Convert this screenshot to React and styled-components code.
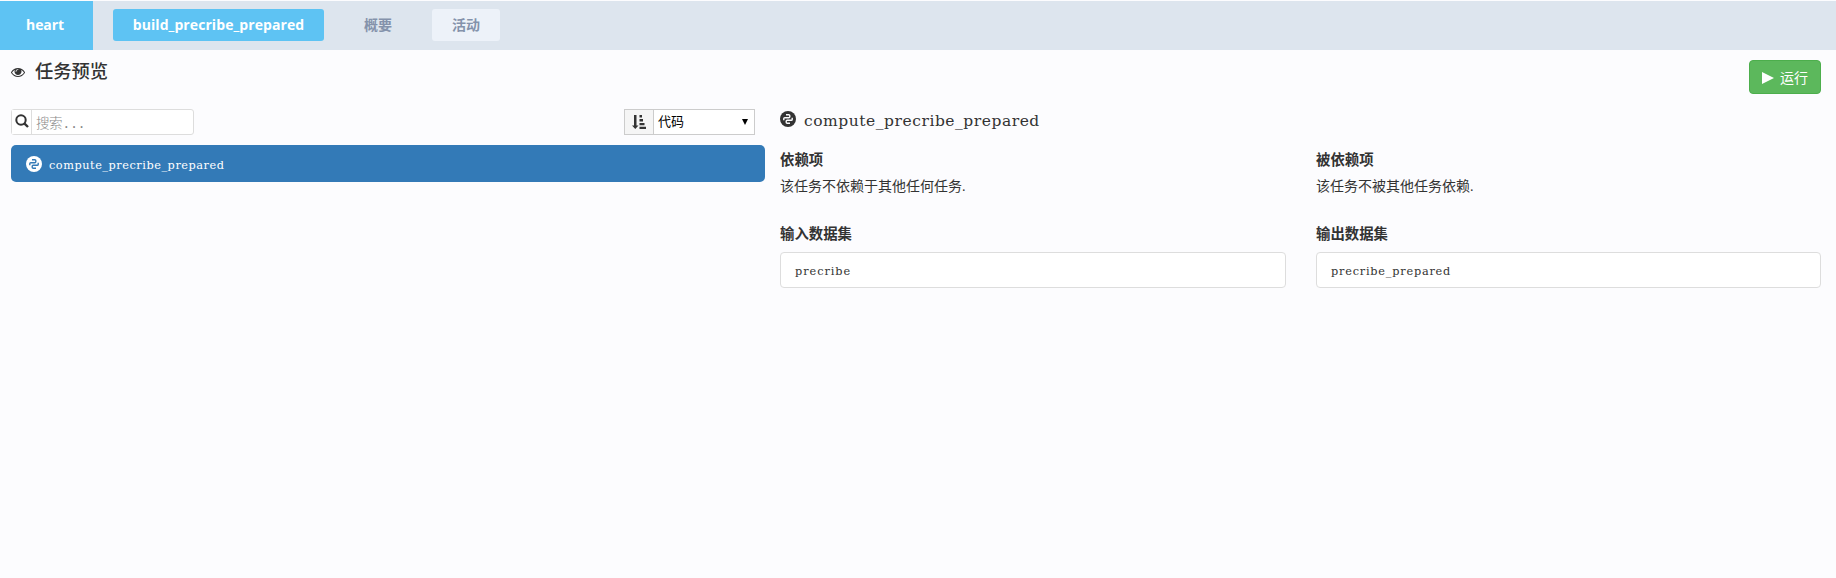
import React from 'react';
import styled, { createGlobalStyle } from 'styled-components';

const song = '"Liberation Serif", "Noto Sans CJK SC", serif';
const slab = '"DejaVu Serif", serif';

const Global = createGlobalStyle`
  * { box-sizing: border-box; }
  body { margin: 0; background: #fcfcfe; color: #333; font: 15px/20px ${song}; }
  h1, h2, h3, p { margin: 0; }
`;
const Page = styled.div`min-height: 578px;`;
const Bar = styled.nav`
  display: flex; align-items: stretch; height: 50px;
  border-top: 1px solid #fcfcfe; background: #dde5ee;
  font-family: "Open Sans", "Noto Sans CJK SC", sans-serif; font-size: 14px; font-weight: 700;
`;
const Brand = styled.div`
  display: flex; align-items: center; justify-content: center;
  width: 93px; padding: 0 3px 1px 0; background: #5ec3f3; color: #fff; letter-spacing: -0.1px;
`;
const Tabs = styled.div`display: flex; align-items: flex-start; padding: 8px 0 0 20px;`;
const Tab = styled.div`
  display: flex; align-items: center; justify-content: center; height: 32px;
  width: ${p => p.$w}px; border-radius: 3px; letter-spacing: ${p => p.$track || 0}px;
  color: ${p => (p.$kind === 'active' ? '#fff' : '#8492ab')};
  background: ${p => ({ active: '#5ec3f3', soft: '#edf2f9' }[p.$kind] || 'transparent')};
`;
const Header = styled.header`
  display: flex; justify-content: space-between; align-items: flex-start; height: 59px; padding: 10px 15px 0 11px;
`;
const Title = styled.h1`
  display: flex; align-items: center; gap: 10px; height: 24px;
  font-size: 18.3px; line-height: 22px; font-weight: 500; color: #333;
`;
const Run = styled.button`
  display: flex; align-items: center; gap: 6px; width: 72px; height: 34px; padding: 3px 0 0 12px;
  border: 1px solid #4cae4c; border-radius: 4px; background: #5cb85c; color: #fff;
  font: 400 14px/20px ${song};
  svg { margin-top: -2px; }
`;
const Body = styled.main`display: flex; gap: 15px; padding: 0 15px 0 11px;`;
const Side = styled.section`width: 754px;`;
const Tools = styled.div`display: flex; justify-content: space-between; padding-right: 10px; margin-bottom: 10px;`;
const Search = styled.label`
  display: flex; width: 183px; height: 26px; border: 1px solid #ddd; border-radius: 3px; background: #fff;
`;
const Addon = styled.span`
  display: flex; align-items: center; justify-content: center; width: ${p => p.$w}px;
  border-right: 1px solid ${p => p.$line}; background: ${p => p.$bg};
  padding-bottom: ${p => p.$lift || 0}px;
`;
const Field = styled.input`
  flex: 1; min-width: 0; border: 0; padding: 5px 0 0 4px; background: transparent; outline: 0;
  font: 300 13.5px/20px "Liberation Mono", "Noto Sans CJK SC", monospace; letter-spacing: -0.4px;
  &::placeholder { color: #888; opacity: 1; }
`;
const Sort = styled.div`display: flex; width: 131px; height: 26px; border: 1px solid #ccc; background: #fff;`;
const Value = styled.div`
  display: flex; flex: 1; align-items: center; justify-content: space-between; padding: 0 6px 0 4px;
  color: #000; font-size: 13px; font-weight: 400;
`;
const Item = styled.div`
  display: flex; align-items: center; gap: 7px; height: 37px; padding: 0 15px; border-radius: 5px;
  background: #337ab7; color: #fff;
`;
const Code = styled.span`
  font-family: ${slab}; font-size: ${p => p.$size || 11.3}px; letter-spacing: ${p => p.$track}px;
  line-height: 16px; padding-top: ${p => p.$drop || 0}px;
`;
const Detail = styled.section`flex: 1;`;
const Name = styled.h2`
  display: flex; align-items: center; gap: 8px; height: 23px; margin-bottom: 18px; font-weight: 400;
  svg { margin-bottom: 3px; }
`;
const Grid = styled.div`display: grid; grid-template-columns: 506px 505px; column-gap: 30px; row-gap: 27px;`;
const Heading = styled.h3`height: 20px; margin-bottom: 7px; font-size: 14.4px; line-height: 20px; font-weight: 700;`;
const Text = styled.p`height: 20px; font-size: 14px; line-height: 20px; font-weight: 400;`;
const Box = styled.div`
  display: flex; align-items: center; height: 36px; padding: 4px 14px 0 14px;
  border: 1px solid #ddd; border-radius: 4px; background: #fff;
`;
const Boxes = styled.div`padding-top: 1px;`;

const Eye = () => (
  <svg width="14" height="12" viewBox="0 0 1792 1536" fill="#333">
    <path d="M1664 832q-152-236-381-353 61 104 61 225 0 185-131.500 316.500t-316.500 131.500-316.500-131.500-131.500-316.500q0-121 61-225-229 117-381 353 133 205 333.500 326.500t434.500 121.500 434.500-121.500 333.500-326.500zm-720-384q0-20-14-34t-34-14q-125 0-214.500 89.500t-89.500 214.500q0 20 14 34t34 14 34-14 14-34q0-86 61-147t147-61q20 0 34-14t14-34zm848 384q0 34-20 69-140 230-376.500 368.500t-499.500 138.500-499.500-139-376.500-368q-20-35-20-69t20-69q140-229 376.500-368t499.500-139 499.500 139 376.500 368q20 35 20 69z" />
  </svg>
);
const Lens = () => (
  <svg width="14" height="14" viewBox="0 0 14 14" fill="none" stroke="#333">
    <circle cx="6" cy="6" r="4.7" strokeWidth="2" /><path d="M9.300 9.300 13 13" strokeWidth="2.400" />
  </svg>
);
const SortIcon = () => (
  <svg width="14" height="14" viewBox="0 0 14 14" fill="#333">
    <path d="M2 0h2.500v10.500H6.500L3.250 14 0 10.500h2zM7.500 0H10v2.500H7.500zM7.500 4H11v2.500H7.500zM7.500 8h5v2.300h-5zM7.500 11.700H14V14H7.500z" />
  </svg>
);
const Snake = ({ size, fg, bg }) => (
  <svg width={size} height={size} viewBox="0 0 16 16">
    <circle cx="8" cy="8" r="8" fill={fg} />
    <g fill="none" stroke={bg} strokeWidth="1.400" strokeLinejoin="round">
      <path d="M3.800 9.200V7.600Q3.800 6.700 4.800 6.700H8.800Q9.800 6.700 9.800 5.800V4.700Q9.800 3.700 8.800 3.700H6" />
      <path d="M12.200 6.800V8.400Q12.200 9.300 11.200 9.300H7.200Q6.200 9.300 6.200 10.200V11.300Q6.200 12.300 7.200 12.300H10" />
    </g>
  </svg>
);
const Triangle = ({ w, h, d, fill }) => <svg width={w} height={h} viewBox={`0 0 ${w} ${h}`} fill={fill}><path d={d} /></svg>;

const Dependency = ({ title, text }) => <div><Heading>{title}</Heading><Text>{text}</Text></div>;
const Dataset = ({ title, name, track }) => (
  <div><Heading>{title}</Heading><Boxes><Box><Code $track={track}>{name}</Code></Box></Boxes></div>
);

export default function App() {
  return (
    <Page>
      <Global />
      <Bar>
        <Brand>heart</Brand>
        <Tabs>
          <Tab $kind="active" $w={211} $track={0.08}>build_precribe_prepared</Tab>
          <Tab $w={108}>概要</Tab>
          <Tab $kind="soft" $w={68}>活动</Tab>
        </Tabs>
      </Bar>
      <Header>
        <Title><Eye />任务预览</Title>
        <Run><Triangle w={12} h={12} d="M0 0 12 6 0 12z" fill="#fff" />运行</Run>
      </Header>
      <Body>
        <Side>
          <Tools>
            <Search><Addon $w={20} $line="#ddd" $bg="#fff" $lift={3}><Lens /></Addon><Field placeholder="搜索..." /></Search>
            <Sort>
              <Addon $w={29} $line="#ccc" $bg="#f5f5f5"><SortIcon /></Addon>
              <Value>代码<Triangle w={6} h={6} d="M0 0h6L3 6z" fill="#000" /></Value>
            </Sort>
          </Tools>
          <Item><Snake size={16} fg="#fff" bg="#337ab7" /><Code $track={0.54} $drop={5}>compute_precribe_prepared</Code></Item>
        </Side>
        <Detail>
          <Name><Snake size={16} fg="#333" bg="#fcfcfe" /><Code $size={15.5} $track={0.54}>compute_precribe_prepared</Code></Name>
          <Grid>
            <Dependency title="依赖项" text="该任务不依赖于其他任何任务." />
            <Dependency title="被依赖项" text="该任务不被其他任务依赖." />
            <Dataset title="输入数据集" name="precribe" track={0.95} />
            <Dataset title="输出数据集" name="precribe_prepared" track={0.78} />
          </Grid>
        </Detail>
      </Body>
    </Page>
  );
}
